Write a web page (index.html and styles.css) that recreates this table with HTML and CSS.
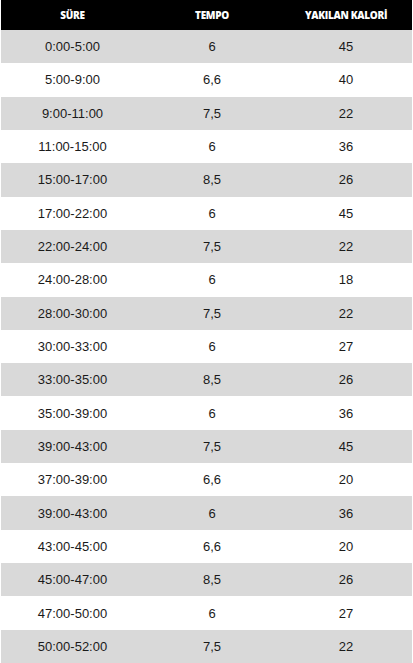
FILE: index.html
```html
<!DOCTYPE html>
<html lang="tr">
<head>
<meta charset="utf-8">
<link rel="stylesheet" href="styles.css">
</head>
<body>
<div class="table">
  <div class="row head"><div>SÜRE</div><div>TEMPO</div><div>YAKILAN KALORİ</div></div>
  <div class="row"><div>0:00-5:00</div><div>6</div><div>45</div></div>
  <div class="row"><div>5:00-9:00</div><div>6,6</div><div>40</div></div>
  <div class="row"><div>9:00-11:00</div><div>7,5</div><div>22</div></div>
  <div class="row"><div>11:00-15:00</div><div>6</div><div>36</div></div>
  <div class="row"><div>15:00-17:00</div><div>8,5</div><div>26</div></div>
  <div class="row"><div>17:00-22:00</div><div>6</div><div>45</div></div>
  <div class="row"><div>22:00-24:00</div><div>7,5</div><div>22</div></div>
  <div class="row"><div>24:00-28:00</div><div>6</div><div>18</div></div>
  <div class="row"><div>28:00-30:00</div><div>7,5</div><div>22</div></div>
  <div class="row"><div>30:00-33:00</div><div>6</div><div>27</div></div>
  <div class="row"><div>33:00-35:00</div><div>8,5</div><div>26</div></div>
  <div class="row"><div>35:00-39:00</div><div>6</div><div>36</div></div>
  <div class="row"><div>39:00-43:00</div><div>7,5</div><div>45</div></div>
  <div class="row"><div>37:00-39:00</div><div>6,6</div><div>20</div></div>
  <div class="row"><div>39:00-43:00</div><div>6</div><div>36</div></div>
  <div class="row"><div>43:00-45:00</div><div>6,6</div><div>20</div></div>
  <div class="row"><div>45:00-47:00</div><div>8,5</div><div>26</div></div>
  <div class="row"><div>47:00-50:00</div><div>6</div><div>27</div></div>
  <div class="row"><div>50:00-52:00</div><div>7,5</div><div>22</div></div>
</div>
</body>
</html>
```
FILE: styles.css
```css
html, body {
  margin: 0;
  padding: 0;
  background: #ffffff;
}
.table {
  height: 663px;
  padding: 0 1px;
  display: grid;
  grid-template-rows: 30px repeat(19, 1fr);
  font-family: "Liberation Sans", Arial, sans-serif;
  font-size: 13px;
  color: #1a1a1a;
}
.row {
  display: grid;
  grid-template-columns: 143px 136px 1fr;
  align-items: center;
  text-align: center;
}
.row:nth-child(even) {
  background: #d9d9d9;
}
.row.head {
  background: #000000;
  color: #ffffff;
  font-family: "Open Sans", sans-serif;
  font-weight: 800;
  font-size: 10px;
  letter-spacing: -0.3px;
}
```
